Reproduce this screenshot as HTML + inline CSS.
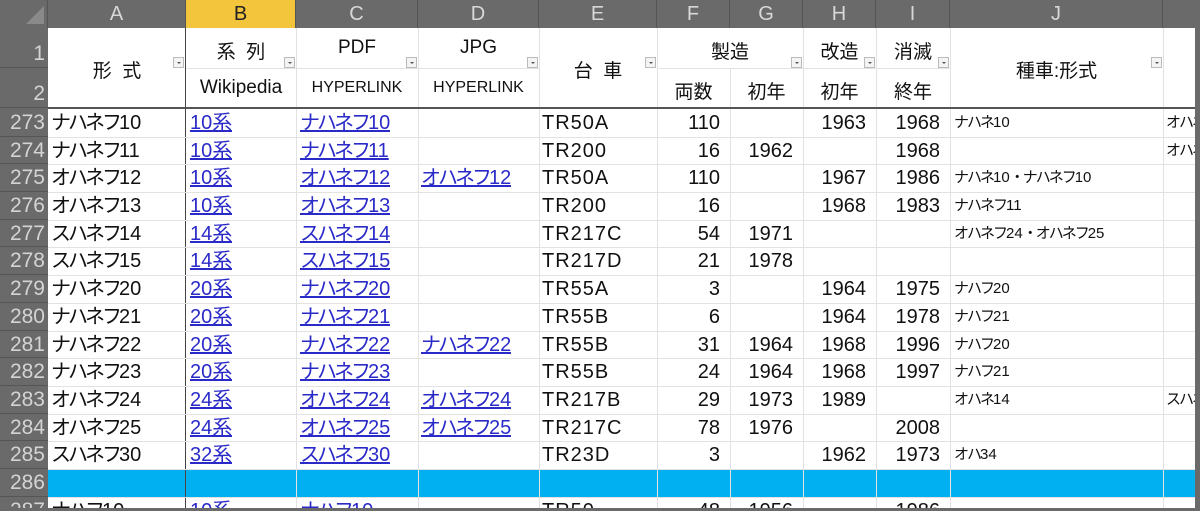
<!DOCTYPE html>
<html><head><meta charset="utf-8"><style>
*{margin:0;padding:0;box-sizing:border-box}
html,body{width:1200px;height:511px;overflow:hidden}
body{background:#fff;font-family:"Liberation Sans","Noto Sans CJK JP",sans-serif;position:relative}
.abs{position:absolute}
.ch{position:absolute;top:0;height:28px;background:#6a6a6a;color:#d8d8d8;font-size:20px;text-align:center;line-height:28px;border-right:1px solid #555}
.rh{position:absolute;left:0;width:48px;background:#6a6a6a;color:#d4d4d4;font-size:21px;text-align:right;padding-right:3px;border-bottom:1px solid #555}
.vl{position:absolute;top:28px;bottom:0;width:1px;background:#e2e2e2}
.hl{position:absolute;left:48px;right:5px;height:1px;background:#e2e2e2}
.c{position:absolute;height:28px;line-height:28px;font-size:20px;color:#111;white-space:nowrap;overflow:hidden}
.k{letter-spacing:-3px}
.e{letter-spacing:1px}
.l{color:#2a2ac8;text-decoration:underline}
.r{text-align:right;padding-right:10px}
.s{font-size:15px}
.s .k{letter-spacing:-2px}
.h{position:absolute;font-size:19px;color:#111;text-align:center}
.hs{font-size:16px}
.fb{position:absolute;width:11px;height:11px;border:1px solid #bbb;background:#f4f4f4}
.fb:after{content:"";position:absolute;left:3px;top:4px;border-left:2px solid transparent;border-right:2px solid transparent;border-top:2px solid #555}
</style></head><body>
<div class="ch" style="left:0;width:48px"></div>
<div class="abs" style="left:26px;top:6px;width:0;height:0;border-left:18px solid transparent;border-bottom:18px solid #8a8a8a"></div>
<div class="ch" style="left:48px;width:138px">A</div>
<div class="ch" style="left:186px;width:110px;background:#f2c53d;color:#222">B</div>
<div class="ch" style="left:296px;width:122px">C</div>
<div class="ch" style="left:418px;width:121px">D</div>
<div class="ch" style="left:539px;width:118px">E</div>
<div class="ch" style="left:657px;width:73px">F</div>
<div class="ch" style="left:730px;width:73px">G</div>
<div class="ch" style="left:803px;width:73px">H</div>
<div class="ch" style="left:876px;width:74px">I</div>
<div class="ch" style="left:950px;width:213px">J</div>
<div class="ch" style="left:1163px;width:37px"></div>

<div class="rh" style="top:28px;height:40px;line-height:52px">1</div>
<div class="rh" style="top:68px;height:40px;line-height:52px">2</div>
<div class="rh" style="top:108px;height:29px;line-height:29px">273</div>
<div class="rh" style="top:137px;height:27px;line-height:27px">274</div>
<div class="rh" style="top:164px;height:28px;line-height:28px">275</div>
<div class="rh" style="top:192px;height:28px;line-height:28px">276</div>
<div class="rh" style="top:220px;height:27px;line-height:27px">277</div>
<div class="rh" style="top:247px;height:28px;line-height:28px">278</div>
<div class="rh" style="top:275px;height:28px;line-height:28px">279</div>
<div class="rh" style="top:303px;height:28px;line-height:28px">280</div>
<div class="rh" style="top:331px;height:27px;line-height:27px">281</div>
<div class="rh" style="top:358px;height:28px;line-height:28px">282</div>
<div class="rh" style="top:386px;height:28px;line-height:28px">283</div>
<div class="rh" style="top:414px;height:27px;line-height:27px">284</div>
<div class="rh" style="top:441px;height:28px;line-height:28px">285</div>
<div class="rh" style="top:469px;height:28px;line-height:28px">286</div>
<div class="rh" style="top:497px;height:20px;line-height:28px">287</div>

<div class="abs" style="left:48px;top:469px;width:1147px;height:28px;background:#00b0f0"></div>

<div class="vl" style="left:296px"></div>
<div class="vl" style="left:418px"></div>
<div class="vl" style="left:539px"></div>
<div class="vl" style="left:657px"></div>
<div class="vl" style="left:730px;top:68px"></div>
<div class="vl" style="left:803px"></div>
<div class="vl" style="left:876px"></div>
<div class="vl" style="left:950px"></div>
<div class="vl" style="left:1163px"></div>
<div class="abs" style="left:185px;top:28px;bottom:0;width:1px;background:#444"></div>
<div class="hl" style="top:68px;left:186px;width:353px"></div>
<div class="hl" style="top:68px;left:657px;width:293px"></div>
<div class="abs" style="left:48px;top:107px;width:1147px;height:2px;background:#555"></div>
<div class="hl" style="top:137px"></div><div class="hl" style="top:164px"></div><div class="hl" style="top:192px"></div>
<div class="hl" style="top:220px"></div><div class="hl" style="top:247px"></div><div class="hl" style="top:275px"></div>
<div class="hl" style="top:303px"></div><div class="hl" style="top:331px"></div><div class="hl" style="top:358px"></div>
<div class="hl" style="top:386px"></div><div class="hl" style="top:414px"></div><div class="hl" style="top:441px"></div>
<div class="hl" style="top:469px"></div><div class="hl" style="top:497px"></div>
<div class="abs" style="left:1195px;top:0;width:5px;height:511px;background:#6a6a6a"></div>

<div class="h" style="left:48px;top:56px;width:138px">形&nbsp;&nbsp;式</div>
<div class="h" style="left:186px;top:37px;width:110px">系&nbsp;&nbsp;列</div>
<div class="h" style="left:186px;top:77px;width:110px">Wikipedia</div>
<div class="h" style="left:296px;top:37px;width:122px">PDF</div>
<div class="h hs" style="left:296px;top:79px;width:122px">HYPERLINK</div>
<div class="h" style="left:418px;top:37px;width:121px">JPG</div>
<div class="h hs" style="left:418px;top:79px;width:121px">HYPERLINK</div>
<div class="h" style="left:539px;top:56px;width:118px">台&nbsp;&nbsp;車</div>
<div class="h" style="left:657px;top:37px;width:146px">製造</div>
<div class="h" style="left:657px;top:77px;width:73px">両数</div>
<div class="h" style="left:730px;top:77px;width:73px">初年</div>
<div class="h" style="left:803px;top:37px;width:73px">改造</div>
<div class="h" style="left:803px;top:77px;width:73px">初年</div>
<div class="h" style="left:876px;top:37px;width:74px">消滅</div>
<div class="h" style="left:876px;top:77px;width:74px">終年</div>
<div class="h" style="left:950px;top:56px;width:213px">種車:形式</div>
<div class="fb" style="left:173px;top:57px"></div>
<div class="fb" style="left:284px;top:57px"></div>
<div class="fb" style="left:406px;top:57px"></div>
<div class="fb" style="left:527px;top:57px"></div>
<div class="fb" style="left:645px;top:57px"></div>
<div class="fb" style="left:791px;top:57px"></div>
<div class="fb" style="left:864px;top:57px"></div>
<div class="fb" style="left:938px;top:57px"></div>
<div class="fb" style="left:1151px;top:57px"></div>

<div class="c" style="left:51px;top:109px"><span class="k">ナハネフ</span>10</div><div class="c l" style="left:190px;top:109px">10系</div><div class="c l" style="left:300px;top:109px"><span class="k">ナハネフ</span>10</div><div class="c e" style="left:542px;top:109px">TR50A</div><div class="c r" style="left:657px;width:73px;top:109px">110</div><div class="c r" style="left:803px;width:73px;top:109px">1963</div><div class="c r" style="left:876px;width:74px;top:109px">1968</div><div class="c s" style="left:954px;top:109px"><span class="k">ナハネ</span>10</div><div class="c s" style="left:1166px;width:29px;top:109px"><span class="k">オハネ</span></div>

<div class="c" style="left:51px;top:137px"><span class="k">ナハネフ</span>11</div><div class="c l" style="left:190px;top:137px">10系</div><div class="c l" style="left:300px;top:137px"><span class="k">ナハネフ</span>11</div><div class="c e" style="left:542px;top:137px">TR200</div><div class="c r" style="left:657px;width:73px;top:137px">16</div><div class="c r" style="left:730px;width:73px;top:137px">1962</div><div class="c r" style="left:876px;width:74px;top:137px">1968</div><div class="c s" style="left:1166px;width:29px;top:137px"><span class="k">オハネ</span></div>

<div class="c" style="left:51px;top:164px"><span class="k">オハネフ</span>12</div><div class="c l" style="left:190px;top:164px">10系</div><div class="c l" style="left:300px;top:164px"><span class="k">オハネフ</span>12</div><div class="c l" style="left:421px;top:164px"><span class="k">オハネフ</span>12</div><div class="c e" style="left:542px;top:164px">TR50A</div><div class="c r" style="left:657px;width:73px;top:164px">110</div><div class="c r" style="left:803px;width:73px;top:164px">1967</div><div class="c r" style="left:876px;width:74px;top:164px">1986</div><div class="c s" style="left:954px;top:164px"><span class="k">ナハネ</span>10<span class="k">・ナハネフ</span>10</div>

<div class="c" style="left:51px;top:192px"><span class="k">オハネフ</span>13</div><div class="c l" style="left:190px;top:192px">10系</div><div class="c l" style="left:300px;top:192px"><span class="k">オハネフ</span>13</div><div class="c e" style="left:542px;top:192px">TR200</div><div class="c r" style="left:657px;width:73px;top:192px">16</div><div class="c r" style="left:803px;width:73px;top:192px">1968</div><div class="c r" style="left:876px;width:74px;top:192px">1983</div><div class="c s" style="left:954px;top:192px"><span class="k">ナハネフ</span>11</div>

<div class="c" style="left:51px;top:220px"><span class="k">スハネフ</span>14</div><div class="c l" style="left:190px;top:220px">14系</div><div class="c l" style="left:300px;top:220px"><span class="k">スハネフ</span>14</div><div class="c e" style="left:542px;top:220px">TR217C</div><div class="c r" style="left:657px;width:73px;top:220px">54</div><div class="c r" style="left:730px;width:73px;top:220px">1971</div><div class="c s" style="left:954px;top:220px"><span class="k">オハネフ</span>24<span class="k">・オハネフ</span>25</div>

<div class="c" style="left:51px;top:247px"><span class="k">スハネフ</span>15</div><div class="c l" style="left:190px;top:247px">14系</div><div class="c l" style="left:300px;top:247px"><span class="k">スハネフ</span>15</div><div class="c e" style="left:542px;top:247px">TR217D</div><div class="c r" style="left:657px;width:73px;top:247px">21</div><div class="c r" style="left:730px;width:73px;top:247px">1978</div>

<div class="c" style="left:51px;top:275px"><span class="k">ナハネフ</span>20</div><div class="c l" style="left:190px;top:275px">20系</div><div class="c l" style="left:300px;top:275px"><span class="k">ナハネフ</span>20</div><div class="c e" style="left:542px;top:275px">TR55A</div><div class="c r" style="left:657px;width:73px;top:275px">3</div><div class="c r" style="left:803px;width:73px;top:275px">1964</div><div class="c r" style="left:876px;width:74px;top:275px">1975</div><div class="c s" style="left:954px;top:275px"><span class="k">ナハフ</span>20</div>

<div class="c" style="left:51px;top:303px"><span class="k">ナハネフ</span>21</div><div class="c l" style="left:190px;top:303px">20系</div><div class="c l" style="left:300px;top:303px"><span class="k">ナハネフ</span>21</div><div class="c e" style="left:542px;top:303px">TR55B</div><div class="c r" style="left:657px;width:73px;top:303px">6</div><div class="c r" style="left:803px;width:73px;top:303px">1964</div><div class="c r" style="left:876px;width:74px;top:303px">1978</div><div class="c s" style="left:954px;top:303px"><span class="k">ナハフ</span>21</div>

<div class="c" style="left:51px;top:331px"><span class="k">ナハネフ</span>22</div><div class="c l" style="left:190px;top:331px">20系</div><div class="c l" style="left:300px;top:331px"><span class="k">ナハネフ</span>22</div><div class="c l" style="left:421px;top:331px"><span class="k">ナハネフ</span>22</div><div class="c e" style="left:542px;top:331px">TR55B</div><div class="c r" style="left:657px;width:73px;top:331px">31</div><div class="c r" style="left:730px;width:73px;top:331px">1964</div><div class="c r" style="left:803px;width:73px;top:331px">1968</div><div class="c r" style="left:876px;width:74px;top:331px">1996</div><div class="c s" style="left:954px;top:331px"><span class="k">ナハフ</span>20</div>

<div class="c" style="left:51px;top:358px"><span class="k">ナハネフ</span>23</div><div class="c l" style="left:190px;top:358px">20系</div><div class="c l" style="left:300px;top:358px"><span class="k">ナハネフ</span>23</div><div class="c e" style="left:542px;top:358px">TR55B</div><div class="c r" style="left:657px;width:73px;top:358px">24</div><div class="c r" style="left:730px;width:73px;top:358px">1964</div><div class="c r" style="left:803px;width:73px;top:358px">1968</div><div class="c r" style="left:876px;width:74px;top:358px">1997</div><div class="c s" style="left:954px;top:358px"><span class="k">ナハフ</span>21</div>

<div class="c" style="left:51px;top:386px"><span class="k">オハネフ</span>24</div><div class="c l" style="left:190px;top:386px">24系</div><div class="c l" style="left:300px;top:386px"><span class="k">オハネフ</span>24</div><div class="c l" style="left:421px;top:386px"><span class="k">オハネフ</span>24</div><div class="c e" style="left:542px;top:386px">TR217B</div><div class="c r" style="left:657px;width:73px;top:386px">29</div><div class="c r" style="left:730px;width:73px;top:386px">1973</div><div class="c r" style="left:803px;width:73px;top:386px">1989</div><div class="c s" style="left:954px;top:386px"><span class="k">オハネ</span>14</div><div class="c s" style="left:1166px;width:29px;top:386px"><span class="k">スハネ</span></div>

<div class="c" style="left:51px;top:414px"><span class="k">オハネフ</span>25</div><div class="c l" style="left:190px;top:414px">24系</div><div class="c l" style="left:300px;top:414px"><span class="k">オハネフ</span>25</div><div class="c l" style="left:421px;top:414px"><span class="k">オハネフ</span>25</div><div class="c e" style="left:542px;top:414px">TR217C</div><div class="c r" style="left:657px;width:73px;top:414px">78</div><div class="c r" style="left:730px;width:73px;top:414px">1976</div><div class="c r" style="left:876px;width:74px;top:414px">2008</div>

<div class="c" style="left:51px;top:441px"><span class="k">スハネフ</span>30</div><div class="c l" style="left:190px;top:441px">32系</div><div class="c l" style="left:300px;top:441px"><span class="k">スハネフ</span>30</div><div class="c e" style="left:542px;top:441px">TR23D</div><div class="c r" style="left:657px;width:73px;top:441px">3</div><div class="c r" style="left:803px;width:73px;top:441px">1962</div><div class="c r" style="left:876px;width:74px;top:441px">1973</div><div class="c s" style="left:954px;top:441px"><span class="k">オハ</span>34</div>

<div class="abs" style="left:48px;top:497px;width:1147px;height:12px;overflow:hidden">
<div class="c" style="left:3px;top:0"><span class="k">ナハフ</span>10</div><div class="c l" style="left:142px;top:0">10系</div><div class="c l" style="left:252px;top:0"><span class="k">ナハフ</span>10</div><div class="c e" style="left:494px;top:0">TR50</div><div class="c r" style="left:609px;width:73px;top:0">48</div><div class="c r" style="left:682px;width:73px;top:0">1956</div><div class="c r" style="left:828px;width:74px;top:0">1986</div>
</div>
<div class="abs" style="left:0;top:508px;width:1200px;height:3px;background:#6a6a6a"></div>
</body></html>
